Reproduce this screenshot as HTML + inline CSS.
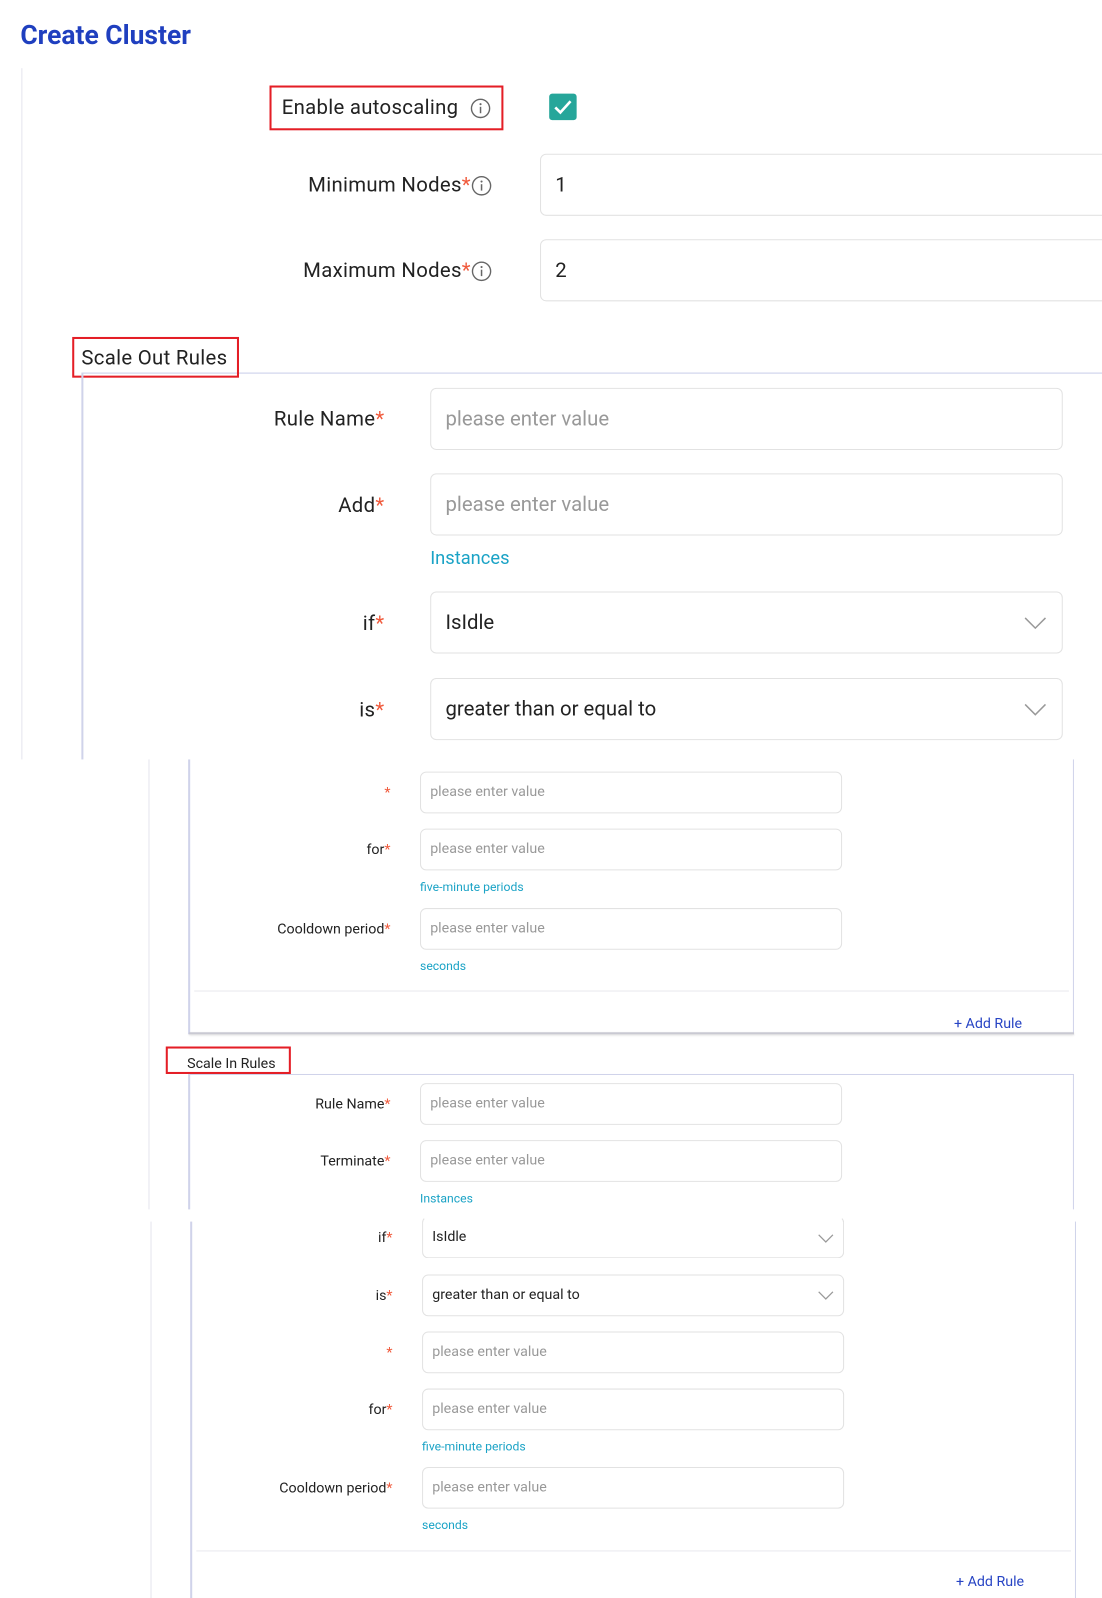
<!DOCTYPE html>
<html><head><meta charset="utf-8">
<style>
html,body{margin:0;padding:0;background:#fff;width:1102px;height:1593px;overflow:hidden;}
#w{position:absolute;left:0;top:0;width:1085px;height:1570px;transform:scale(1.017,1.018);transform-origin:0 0;font-family:"Roboto","Liberation Sans",sans-serif;color:#222;}
#w div{position:absolute;box-sizing:border-box;}
.vl{width:1px;background:#e4e4ee;}
.pl{width:2px;background:#d0d3ea;}
.red{border:2px solid #e41e26;}
.st{color:#f05a3c;}
.inp{border:1px solid #e2e2e2;border-radius:6px;background:#fff;color:#999;}
.lab{text-align:right;white-space:nowrap;}
.help{color:#1ba3c6;white-space:nowrap;}
.add{color:#2744c4;white-space:nowrap;}
.chev{position:absolute;}
.big{font-size:20px;letter-spacing:0.3px;}
.s{font-size:14px;}
.si{font-size:14px;padding:11px 0 0 9px;}
.sh{font-size:12px;}
</style></head><body>
<div id="w">
<div style="left:20px;top:20px;font-size:26px;font-weight:bold;color:#1f3fbf;white-space:nowrap;">Create Cluster</div>

<div class="vl" style="left:21px;top:67px;height:679px;"></div>
<div class="red" style="left:265px;top:84px;width:230px;height:44px;"></div>
<div class="big" style="left:277px;top:93px;white-space:nowrap;">Enable autoscaling</div>
<svg style="position:absolute;left:462px;top:96px" width="21" height="21" viewBox="0 0 20 20"><circle cx="10" cy="10" r="8.5" fill="none" stroke="#666" stroke-width="1.3"/><circle cx="10" cy="6" r="1" fill="#666"/><rect x="9.3" y="8.5" width="1.4" height="6" fill="#666"/></svg>
<div style="left:540px;top:92px;width:27px;height:26px;background:#26a69a;border-radius:3px;"></div>
<svg style="position:absolute;left:540px;top:92px" width="27" height="26" viewBox="0 0 27 26"><path d="M6 13.5 L11 18.5 L21 7.5" fill="none" stroke="#fff" stroke-width="2.6"/></svg>

<div class="lab big" style="right:622px;top:169px;">Minimum Nodes<span class="st">*</span></div>
<svg style="position:absolute;left:463px;top:172px" width="21" height="21" viewBox="0 0 20 20"><circle cx="10" cy="10" r="8.5" fill="none" stroke="#666" stroke-width="1.3"/><circle cx="10" cy="6" r="1" fill="#666"/><rect x="9.3" y="8.5" width="1.4" height="6" fill="#666"/></svg>
<div class="inp" style="left:531px;top:151px;width:600px;height:61px;color:#222;font-size:20px;padding:17px 0 0 14px;">1</div>
<div class="lab big" style="right:622px;top:253px;">Maximum Nodes<span class="st">*</span></div>
<svg style="position:absolute;left:463px;top:256px" width="21" height="21" viewBox="0 0 20 20"><circle cx="10" cy="10" r="8.5" fill="none" stroke="#666" stroke-width="1.3"/><circle cx="10" cy="6" r="1" fill="#666"/><rect x="9.3" y="8.5" width="1.4" height="6" fill="#666"/></svg>
<div class="inp" style="left:531px;top:235px;width:600px;height:61px;color:#222;font-size:20px;padding:17px 0 0 14px;">2</div>

<div style="left:81px;top:366px;width:1010px;height:1px;background:#c8cdea;"></div>
<div class="red" style="left:71px;top:331px;width:164px;height:40px;"></div>
<div class="big" style="left:80px;top:339px;white-space:nowrap;">Scale Out Rules</div>
<div class="pl" style="left:80px;top:366px;height:380px;"></div>

<div class="lab big" style="right:707px;top:399px;">Rule Name<span class="st">*</span></div>
<div class="inp" style="left:423px;top:381px;width:622px;height:61px;font-size:20px;padding:17px 0 0 14px;">please enter value</div>
<div class="lab big" style="right:707px;top:484px;">Add<span class="st">*</span></div>
<div class="inp" style="left:423px;top:465px;width:622px;height:61px;font-size:20px;padding:17px 0 0 14px;">please enter value</div>
<div class="help" style="left:423px;top:538px;font-size:18px;">Instances</div>
<div class="lab big" style="right:707px;top:600px;">if<span class="st">*</span></div>
<div class="inp" style="left:423px;top:581px;width:622px;height:61px;font-size:20px;padding:17px 0 0 14px;color:#222;">IsIdle</div>
<svg class="chev" style="left:1006px;top:604px" width="24" height="16" viewBox="0 0 24 16"><path d="M2 3 L12 13 L22 3" fill="none" stroke="#999" stroke-width="1.5"/></svg>
<div class="lab big" style="right:707px;top:685px;">is<span class="st">*</span></div>
<div class="inp" style="left:423px;top:666px;width:622px;height:61px;font-size:20px;padding:17px 0 0 14px;color:#222;">greater than or equal to</div>
<svg class="chev" style="left:1006px;top:689px" width="24" height="16" viewBox="0 0 24 16"><path d="M2 3 L12 13 L22 3" fill="none" stroke="#999" stroke-width="1.5"/></svg>

<!-- Section 2 -->
<div class="vl" style="left:146px;top:746px;height:442px;"></div>
<div class="pl" style="left:185px;top:746px;height:270px;"></div>
<div style="left:1055px;top:746px;width:1px;height:270px;background:#d0d3ea;"></div>
<div style="left:186px;top:1014px;width:870px;height:2px;background:#c9c9d2;box-shadow:0 1px 2px rgba(0,0,0,.15);"></div>

<div class="lab s" style="right:701px;top:771px;"><span class="st">*</span></div>
<div class="inp si" style="left:413px;top:758px;width:415px;height:41px;">please enter value</div>
<div class="lab s" style="right:701px;top:827px;">for<span class="st">*</span></div>
<div class="inp si" style="left:413px;top:814px;width:415px;height:41px;">please enter value</div>
<div class="help sh" style="left:413px;top:864px;">five-minute periods</div>
<div class="lab s" style="right:701px;top:905px;">Cooldown period<span class="st">*</span></div>
<div class="inp si" style="left:413px;top:892px;width:415px;height:41px;">please enter value</div>
<div class="help sh" style="left:413px;top:942px;">seconds</div>
<div style="left:191px;top:973px;width:860px;height:1px;background:#e8e8ee;"></div>
<div class="add s" style="left:938px;top:998px;">+ Add Rule</div>

<div style="left:186px;top:1055px;width:870px;height:1px;background:#d0d3ea;"></div>
<div class="red" style="left:163px;top:1028px;width:123px;height:27px;"></div>
<div class="s" style="left:184px;top:1037px;white-space:nowrap;">Scale In Rules</div>
<div class="pl" style="left:185px;top:1055px;height:133px;"></div>
<div style="left:1055px;top:1055px;width:1px;height:133px;background:#d0d3ea;"></div>
<div class="lab s" style="right:701px;top:1077px;">Rule Name<span class="st">*</span></div>
<div class="inp si" style="left:413px;top:1064px;width:415px;height:41px;">please enter value</div>
<div class="lab s" style="right:701px;top:1133px;">Terminate<span class="st">*</span></div>
<div class="inp si" style="left:413px;top:1120px;width:415px;height:41px;">please enter value</div>
<div class="help sh" style="left:413px;top:1170px;">Instances</div>

<!-- Section 3 -->
<div class="vl" style="left:148px;top:1200px;height:370px;"></div>
<div class="pl" style="left:187px;top:1200px;height:370px;"></div>
<div style="left:1057px;top:1200px;width:1px;height:370px;background:#d0d3ea;"></div>
<div class="lab s" style="right:699px;top:1208px;">if<span class="st">*</span></div>
<div class="inp si" style="left:415px;top:1195px;width:415px;height:41px;color:#222;border-top-color:transparent;">IsIdle</div>
<svg class="chev" style="left:804px;top:1211px" width="16" height="11" viewBox="0 0 16 11"><path d="M1 2 L8 9 L15 2" fill="none" stroke="#999" stroke-width="1.2"/></svg>
<div class="lab s" style="right:699px;top:1265px;">is<span class="st">*</span></div>
<div class="inp si" style="left:415px;top:1252px;width:415px;height:41px;color:#222;">greater than or equal to</div>
<svg class="chev" style="left:804px;top:1267px" width="16" height="11" viewBox="0 0 16 11"><path d="M1 2 L8 9 L15 2" fill="none" stroke="#999" stroke-width="1.2"/></svg>
<div class="lab s" style="right:699px;top:1321px;"><span class="st">*</span></div>
<div class="inp si" style="left:415px;top:1308px;width:415px;height:41px;">please enter value</div>
<div class="lab s" style="right:699px;top:1377px;">for<span class="st">*</span></div>
<div class="inp si" style="left:415px;top:1364px;width:415px;height:41px;">please enter value</div>
<div class="help sh" style="left:415px;top:1414px;">five-minute periods</div>
<div class="lab s" style="right:699px;top:1454px;">Cooldown period<span class="st">*</span></div>
<div class="inp si" style="left:415px;top:1441px;width:415px;height:41px;">please enter value</div>
<div class="help sh" style="left:415px;top:1491px;">seconds</div>
<div style="left:193px;top:1523px;width:860px;height:1px;background:#e8e8ee;"></div>
<div class="add s" style="left:940px;top:1546px;">+ Add Rule</div>
</div>
</body></html>
